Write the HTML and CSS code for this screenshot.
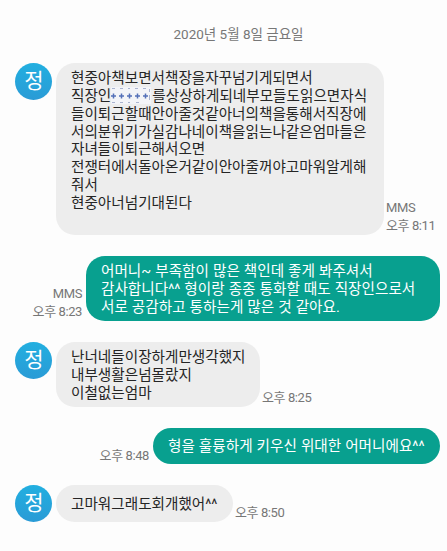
FILE: index.html
```html
<!DOCTYPE html>
<html lang="ko">
  <head>
    <meta charset="UTF-8" />
    <meta name="viewport" content="width=device-width, initial-scale=1.0" />
    <title>메시지</title>
    <link rel="stylesheet" href="styles.css">
  </head>
  <body>
    <div class="chat">
      <div class="date">2020년 5월 8일 금요일</div>

      <div class="row">
        <div class="avatar"><span>정</span></div>
        <div class="bubble first">
          현중아책보면서책장을자꾸넘기게되면서<br />
          직장인<svg class="mask" viewBox="0 0 40 17" width="40" height="17">
            <rect width="40" height="17" fill="#f3f4f8" />
            <path class="dots" d="M1 1.500h3M9 1.500h3M17 1.500h2M24 1.500h3M32 1.500h3M1 15.500h3M9 15.500h3M17 15.500h2M25 15.500h3M38.500 2v3M38.500 8v5" />
            <path class="plus" d="M0 9h5M2.500 6.500v5M8 9h5M10.500 6.500v5M16 9h5M18.500 6.500v5M24 9h5M26.500 6.500v5M32 9h5M34.500 6.500v5" />
          </svg>를상상하게되네부모들도읽으면자식<br />
          들이퇴근할때안아줄것같아너의책을통해서직장에<br />
          서의분위기가실감나네이책을읽는나같은엄마들은<br />
          자녀들이퇴근해서오면<br />
          전쟁터에서돌아온거같이안아줄꺼야고마워알게해<br />
          줘서<br />
          현중아너넘기대된다<br />
          <br />
        </div>
        <div class="meta">MMS<br />오후 8:11</div>
      </div>

      <div class="row sent">
        <div class="meta">MMS<br />오후 8:23</div>
        <div class="bubble second">
          어머니~ 부족함이 많은 책인데 좋게 봐주셔서<br />
          감사합니다^^ 형이랑 종종 통화할 때도 직장인으로서<br />
          서로 공감하고 통하는게 많은 것 같아요.
        </div>
      </div>

      <div class="row">
        <div class="avatar"><span>정</span></div>
        <div class="bubble third">
          난너네들이장하게만생각했지<br />
          내부생활은넘몰랐지<br />
          이철없는엄마
        </div>
        <div class="meta">오후 8:25</div>
      </div>

      <div class="row sent">
        <div class="meta">오후 8:48</div>
        <div class="bubble single fourth">형을 훌륭하게 키우신 위대한 어머니에요^^</div>
      </div>

      <div class="row">
        <div class="avatar"><span>정</span></div>
        <div class="bubble single fifth">고마워그래도회개했어^^</div>
        <div class="meta">오후 8:50</div>
      </div>
    </div>
  </body>
</html>
```
FILE: styles.css
```css
* {
  box-sizing: border-box;
  margin: 0;
  padding: 0;
}
body {
  background-color: #fdfdfd;
  font-family: Roboto, "Noto Sans CJK KR", sans-serif;
  font-size: 14.6px;
  line-height: 17.85px;
  color: #252525;
  overflow: hidden;
}
.chat {
  display: flex;
  flex-direction: column;
  gap: 20.5px;
  height: 551px;
  padding: 25px 7px 0 15px;
}
.date {
  height: 17px;
  padding: 1px 0 0 22px;
  text-align: center;
  font-size: 13.5px;
  color: #777;
}
.row {
  display: flex;
  align-items: flex-end;
}
.sent {
  justify-content: flex-end;
}
.avatar {
  display: flex;
  justify-content: center;
  align-items: center;
  align-self: flex-start;
  flex: none;
  width: 37px;
  height: 37px;
  margin-right: 4px;
  padding: 1px 0 0 1px;
  border-radius: 50%;
  background: linear-gradient(#22afe0, #2a9bd6);
  color: #fff;
  font-size: 21px;
}
.bubble {
  flex: none;
  padding: 7.5px 15px 4.5px;
  border-radius: 19px;
  background-color: #ededed;
  white-space: nowrap;
}
.single {
  padding: 10.5px 15px 8.65px;
}
.sent .bubble {
  background-color: #08a08f;
  color: #fff;
  word-spacing: 0.4px;
}
.first {
  width: 328px;
  height: 172.5px;
}
.second {
  width: 354px;
  height: 65.5px;
}
.third {
  width: 204px;
  height: 65.5px;
}
.fourth {
  width: 287px;
}
.fifth {
  width: 177px;
}
.meta {
  flex: none;
  padding: 0 2px;
  font-size: 13px;
  letter-spacing: -0.4px;
  white-space: nowrap;
  color: #777;
}
.sent .meta {
  padding: 0 4px;
  text-align: right;
}
/* blurred-out name */
.mask {
  margin: -3px 1px -3px 0;
  vertical-align: 0;
}
.plus {
  stroke: #5470b8;
  stroke-width: 1.5;
}
.dots {
  stroke: #a9b3cf;
}
```
